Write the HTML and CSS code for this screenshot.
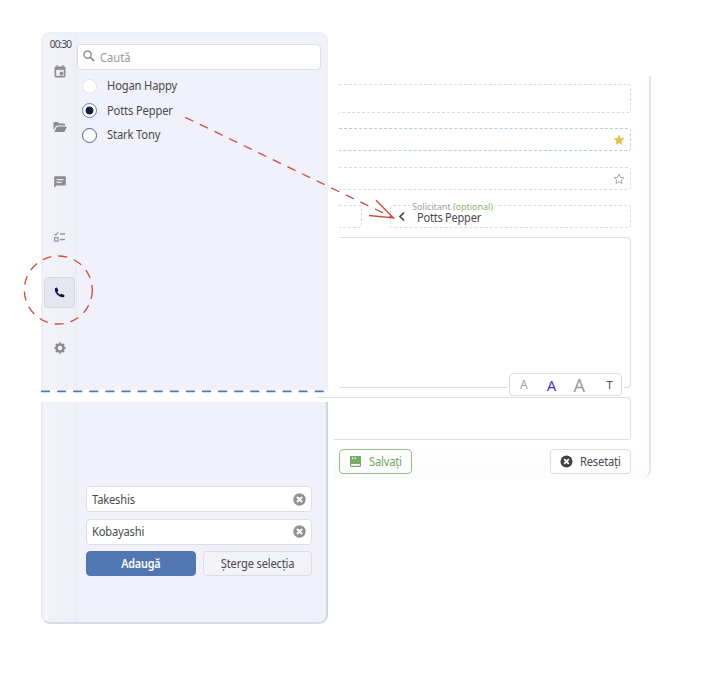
FILE: index.html
```html
<!DOCTYPE html>
<html lang="ro">
<head>
<meta charset="utf-8">
<title>Solicitant</title>
<link rel="stylesheet" href="styles.css">
</head>
<body>
<main class="stage">
  <aside class="side">
    <section class="panel panel-top">
      <nav class="rail">
        <span class="clock">00:30</span>
        <button class="rail-btn"><svg width="14" height="14" viewBox="0 0 24 24"><path fill="#8c8c90" stroke="#8c8c90" stroke-width=".8" d="M17 12h-5v5h5v-5zM16 1v2H8V1H6v2H5c-1.1 0-2 .9-2 2v14c0 1.1.9 2 2 2h14c1.100 0 2-.9 2-2V5c0-1.100-.9-2-2-2h-1V1h-2zm3 18H5V8h14v11z"/></svg></button>
        <button class="rail-btn"><svg width="14" height="12" viewBox="0 0 14 12"><path fill="#8c8c90" d="M.5 9V2q0-1 1-1h3.300l1.400 1.500h4.800q1 0 1 1V4.500H4.200q-.9 0-1.300.8zM1.300 11l2.400-4.900q.3-.6 1-.6h8.700q.7 0 .4.600l-2.200 4.300q-.3.600-1 .6z"/></svg></button>
        <button class="rail-btn"><svg width="14" height="14" viewBox="0 0 24 24"><path fill="#8c8c90" d="M20 2H4c-1.100 0-2 .9-2 2v18l4-4h14c1.100 0 2-.9 2-2V4c0-1.100-.9-2-2-2z"/><path fill="#e4e4ea" d="M6 7h12v2H6zM6 11.500h9v2H6z"/></svg></button>
        <button class="rail-btn"><svg width="13" height="12" viewBox="0 0 13 12"><g fill="none" stroke="#96969b"><path stroke-width="1.100" d="M1.600 2.900l1.300 1.200L5.300 1.200M1.600 6.600h3.500v3.500H1.600z"/><path stroke-width="1.300" d="M7 3h5M7 8.500h5"/></g></svg></button>
        <button class="rail-btn active"><svg width="11" height="11" viewBox="0 0 11 11"><path fill="none" stroke="#151443" stroke-width="1.800" d="M1.700 2.300C1.700 6 5 9.300 8.700 9.300"/><path fill="none" stroke="#151443" stroke-width="2.800" stroke-linecap="round" d="M2.300 2l.5 1.600M7.500 8.300l1.600.5"/></svg></button>
        <button class="rail-btn"><svg width="12" height="12" viewBox="0 0 24 24"><circle cx="12" cy="12" r="6.500" fill="none" stroke="#8c8c90" stroke-width="4"/><g stroke="#8c8c90" stroke-width="5"><path d="M12 1v4M12 19v4M1 12h4M19 12h4M4.200 4.200l2.800 2.800M17 17l2.800 2.800M4.200 19.800l2.800-2.800M17 7l2.800-2.800"/></g></svg></button>
      </nav>
      <div class="people">
        <div class="search"><svg width="12" height="12" viewBox="0 0 12 12" fill="none" stroke="#8f8f92"><circle cx="4.600" cy="4.600" r="3.600" stroke-width="1.400"/><path stroke-width="1.800" d="M7.200 7.200l4 4"/></svg><span class="t">Caută</span></div>
        <label class="person"><i class="radio off"></i><span class="t">Hogan Happy</span></label>
        <label class="person"><i class="radio on"></i><span class="t">Potts Pepper</span></label>
        <label class="person"><i class="radio"></i><span class="t">Stark Tony</span></label>
      </div>
    </section>
    <section class="panel panel-bottom">
      <div class="rail"></div>
      <div class="add-form">
        <div class="input"><span class="t">Takeshis</span><svg width="13" height="13" viewBox="0 0 13 13"><circle cx="6.500" cy="6.500" r="6.200" fill="#929296"/><path stroke="#fff" stroke-width="1.900" d="M4 4l5 5M9 4l-5 5"/></svg></div>
        <div class="input"><span class="t">Kobayashi</span><svg width="13" height="13" viewBox="0 0 13 13"><circle cx="6.500" cy="6.500" r="6.200" fill="#929296"/><path stroke="#fff" stroke-width="1.900" d="M4 4l5 5M9 4l-5 5"/></svg></div>
        <div class="actions"><button class="btn primary"><span class="t">Adaugă</span></button><button class="btn plain"><span class="t">Șterge selecția</span></button></div>
      </div>
    </section>
  </aside>

  <section class="form">
    <div class="field tall"></div>
    <div class="field blue"><svg width="12" height="12" viewBox="0 0 24 24"><path fill="#e5c04d" stroke="#e5c04d" d="M12 17.300l6.200 3.700-1.600-7L22 9.200l-7.200-.6L12 2 9.200 8.600 2 9.200 7.500 14l-1.700 7z"/></svg></div>
    <div class="field third"><svg width="12" height="12" viewBox="0 0 24 24"><path fill="none" stroke="#a9a9b3" stroke-width="2" d="M12 17.300l6.200 3.700-1.600-7L22 9.200l-7.200-.6L12 2 9.200 8.600 2 9.200 7.500 14l-1.700 7z"/></svg></div>
    <div class="pair">
      <div class="field part"></div>
      <div class="field requester">
        <span class="legend">Solicitant <em>(optional)</em></span>
        <svg width="8" height="11" viewBox="0 0 8 11"><path d="M6 1.500L2 5.500l4 4" fill="none" stroke="#444" stroke-width="1.700"/></svg>
        <span class="value t">Potts Pepper</span>
      </div>
    </div>
    <div class="editor">
      <div class="sizes"><span class="s1">A</span><span class="s2">A</span><span class="s3">A</span><span class="s4">T</span></div>
    </div>
    <div class="notes"></div>
    <footer class="foot">
      <button class="btn save"><svg width="11" height="11" viewBox="0 0 11 11"><rect x=".6" y=".6" width="9.800" height="9.800" rx="1" fill="#fff" stroke="#74ac65" stroke-width="1.200"/><path fill="#74ac65" d="M0 1q0-1 1-1h9q1 0 1 1v7H0z"/><path fill="#fff" d="M2 1.500h1.300v1.400H2zM4.700 1.500h1.300v1.400H4.700z"/></svg><span class="t">Salvați</span></button>
      <button class="btn reset"><svg width="13" height="13" viewBox="0 0 13 13"><circle cx="6.500" cy="6.500" r="6" fill="#414145"/><path stroke="#fff" stroke-width="1.800" d="M4.200 4.200l4.600 4.600M8.800 4.200L4.200 8.800"/></svg><span class="t">Resetați</span></button>
    </footer>
  </section>

  <svg class="marks" width="704" height="691" viewBox="0 0 704 691" fill="none">
    <path d="M41 391.300H326" stroke="#437bc0" stroke-width="1.800" stroke-dasharray="9 7.100"/>
    <g stroke="#d4493f" stroke-width="1.300">
      <circle cx="58.300" cy="290" r="34" stroke-dasharray="9 7"/>
      <path d="M185.300 117.300L393.500 218" stroke-dasharray="9 7.200"/>
      <path d="M376 200.300L393.500 218L369 215.500"/>
    </g>
  </svg>
</main>
</body>
</html>
```
FILE: styles.css
```css
* { box-sizing: border-box; }
body { margin: 0; background: #fff; color: #4a4a4e; font: 12px/16px "Noto Sans", "Open Sans", sans-serif; }
button { font: inherit; color: inherit; padding: 0; margin: 0; border: 0; background: none; }
svg { display: block; flex: none; }
span { white-space: nowrap; }
.t { transform: scaleX(.93); transform-origin: 0 50%; }
.stage { position: relative; width: 704px; height: 691px; overflow: hidden; display: flex; }
.side { width: 287px; margin: 32px 0 0 41px; flex: none; }
.panel { display: grid; grid-template-columns: 34px 1fr; background: #f1f1fb; }
.panel-top { height: 358px; border: 2px solid #eeeff2; border-right-color: #f1eff0; border-bottom: 0; border-radius: 9px 9px 0 0; }
.panel-bottom { height: 222px; margin-top: 12px; border: 2px solid #e9ebf1; border-top: 0; border-right-color: #cdd7e9; border-bottom-color: #d3dcea; border-radius: 0 0 9px 9px; }
.rail { border-right: 1px solid #eaebee; background: linear-gradient(90deg, #f3f4f8, #efeff9); border-radius: 7px 0 0 7px; display: flex; flex-direction: column; align-items: center; }
.clock { font-size: 10px; line-height: 12px; letter-spacing: -.85px; margin: 4px 0 6px 2px; }
.rail-btn { width: 31px; height: 31px; flex: none; margin: 0 0 24.300px; display: grid; place-items: center; border-radius: 4px; }
.rail-btn.active { background: #e4e7f0; border: 1px solid #d7d9df; }
.people { padding: 10px 5px 0 0; }
.search { height: 26px; background: #fff; border: 1px solid #dfdfe3; border-radius: 4px; display: flex; align-items: center; gap: 5px; padding-left: 5px; margin-bottom: 4px; color: #96969a; }
.search svg { margin-top: -2px; }
.search .t { padding-top: 1px; }
.person { display: flex; align-items: center; height: 24.600px; padding-left: 5px; gap: 10px; letter-spacing: -.15px; }
.radio { width: 15px; height: 15px; border: 1px solid #46638f; border-radius: 50%; background: #fff; flex: none; }
.radio.off { border-color: #e2e2e7; }
.radio.on { border-color: #5e83bc; background: radial-gradient(circle, #1b1c4b 3.600px, #fff 4.300px); }
.add-form { padding: 84px 14px 0 9px; }
.input { height: 26px; background: #fff; border: 1px solid #dfdfe3; border-radius: 4px; display: flex; align-items: center; justify-content: space-between; padding: 0 5px; margin-bottom: 6.500px; letter-spacing: -.2px; }
.input .t { padding-top: 1px; }
.actions { display: grid; grid-template-columns: 110px 1fr; gap: 7px; }
.btn { height: 25px; border: 1px solid #dddde1; border-radius: 4px; display: flex; align-items: center; justify-content: center; letter-spacing: -.2px; }
.btn .t { padding-top: 1px; }
.primary { background: #5077b2; border-color: #5077b2; color: #fff; font-weight: 600; }
.primary .t, .plain .t { transform-origin: 50% 50%; }
.primary .t { transform: scaleX(.9); }
.plain { background: #f2f2f9; }
.form { width: 312px; height: 403px; margin: 76px 0 0 11px; padding: 8px 18px 0 0; border-right: 2px solid #dce4f5; border-radius: 0 0 10px 0; flex: none; }
.field { height: 23px; border: 1px dashed #dcdcdf; border-left: 0; border-radius: 0 3px 3px 0; display: flex; align-items: center; justify-content: flex-end; padding-right: 5px; }
.tall { height: 29px; margin-bottom: 15px; }
.blue { border-color: #b8cbe5; margin-bottom: 16px; }
.third { margin-bottom: 15px; }
.pair { display: flex; justify-content: space-between; margin-bottom: 9px; }
.part { width: 23px; }
.requester { position: relative; width: 241px; border-left: 1px dashed #dcdcdf; border-radius: 3px; justify-content: flex-start; padding-left: 7px; gap: 11px; letter-spacing: -.25px; }
.legend { position: absolute; left: 19px; top: -4px; padding: 0 2px; font-size: 9px; line-height: 10px; letter-spacing: -.02px; color: #a0a0a3; background: #fff; }
.legend em { font-style: normal; color: #92b273; }
.value { line-height: 12px; padding-top: 2px; }
.requester .value { transform: scaleX(.92); }
.editor { position: relative; height: 151px; border: 1px solid #dedee1; border-left: 0; border-radius: 0 4px 4px 0; }
.sizes { position: absolute; right: 8px; bottom: -9px; width: 113px; height: 23px; display: grid; grid-template-columns: repeat(4, 1fr); align-items: center; justify-items: center; background: #fff; border: 1px solid #dedee1; border-radius: 4px; box-shadow: -2px 0 #fff, 2px 0 #fff; }
.s1 { color: #a2a2a5; font-size: 12px; }
.s2 { color: #4e2fd5; font-size: 15px; }
.s3 { color: #9c9c9e; font-size: 18px; }
.s4 { font-size: 11px; padding-left: 5px; }
.notes { height: 43px; margin: 9px 0 5px -22px; border: 1px solid #dedee1; border-left: 0; border-bottom: 0; border-radius: 0 4px 4px 0; background: linear-gradient(#dedee1, #dedee1) 17px 100% / 100% 1px no-repeat; }
.foot { display: flex; justify-content: space-between; margin: 0 -16px 0 -5px; padding: 4px 16px 5px 5px; background: linear-gradient(#fff, #fafbfb); border-radius: 0 0 8px 0; }
.save { width: 73px; border-color: #93c286; color: #71a663; gap: 8px; padding-left: 3px; }
.reset { width: 81px; gap: 7px; background: #fff; padding-left: 3px; }
.marks { position: absolute; left: 0; top: 0; }
```
